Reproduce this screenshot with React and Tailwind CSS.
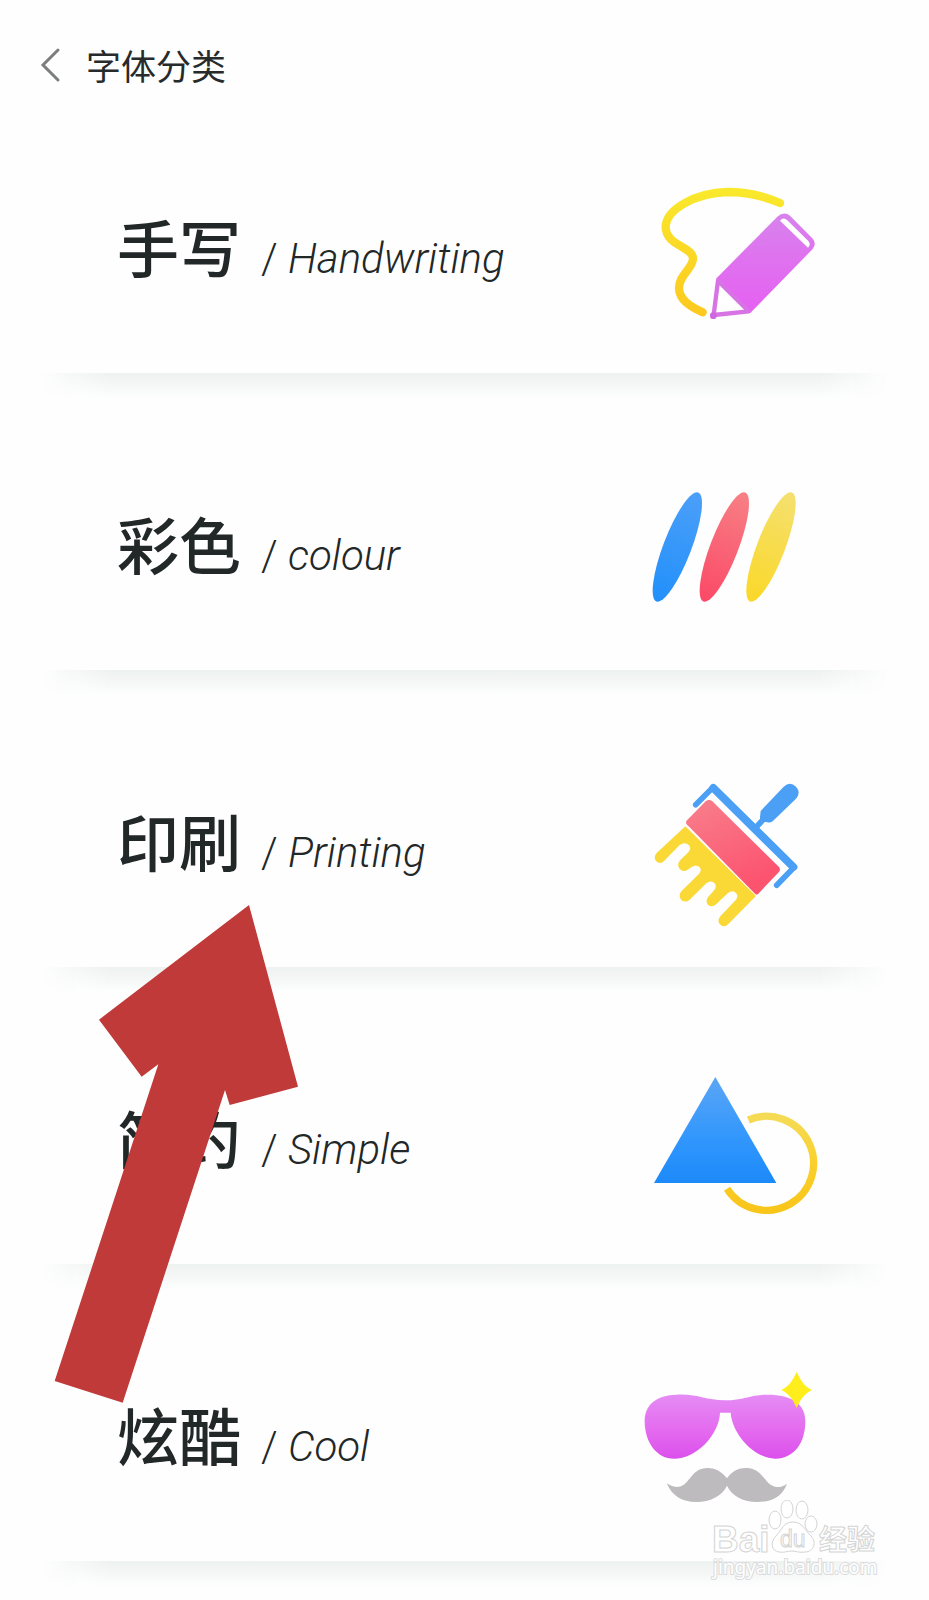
import React from "react";

function PencilIcon() {
  return (
    <g transform="translate(0 6)">
      <defs>
        <linearGradient id="line" x1="0" y1="0" x2="0" y2="1">
          <stop offset="0" stopColor="#f9e82c" />
          <stop offset="1" stopColor="#fdc91f" />
        </linearGradient>
        <linearGradient id="pencil" x1="0" y1="0" x2="0" y2="1">
          <stop offset="0" stopColor="#d783ec" />
          <stop offset="0.45" stopColor="#df72ef" />
          <stop offset="1" stopColor="#e560f2" />
        </linearGradient>
      </defs>
      <path
        d="M420 99C365 75 318 66 262 66C165 69 77 118 77 172C78 228 160 229 159 266C158 297 116 315 117 355C118 390 152 410 188 427"
        fill="none" stroke="url(#line)" strokeWidth="25" strokeLinecap="round"
      />
      <path d="M228 326L412 140Q432 122 450 137L517 205Q531 221 518 237L330 430Z" fill="url(#pencil)" />
      <path d="M420 152Q430 140 441 150L505 213Q514 224 504 233Z" fill="#fff" />
      <path d="M234 332L221 435L326 424Z" fill="#fff" stroke="#d873e6" strokeWidth="13" strokeLinejoin="round" />
      <circle cx="220" cy="437" r="10" fill="#cf66de" />
    </g>
  );
}

function ColourIcon() {
  return (
    <g transform="translate(0 45)">
      <defs>
        <linearGradient id="blueLeaf" x1="0" y1="0" x2="0" y2="1">
          <stop offset="0" stopColor="#4b9ff8" />
          <stop offset="1" stopColor="#2290fb" />
        </linearGradient>
        <linearGradient id="redLeaf" x1="0" y1="0" x2="0" y2="1">
          <stop offset="0" stopColor="#f78085" />
          <stop offset="1" stopColor="#fb4967" />
        </linearGradient>
        <linearGradient id="yellowLeaf" x1="0" y1="0" x2="0" y2="1">
          <stop offset="0" stopColor="#f5e070" />
          <stop offset="1" stopColor="#fad828" />
        </linearGradient>
      </defs>
      <ellipse rx="42" ry="175" transform="translate(112 201) rotate(21)" fill="url(#blueLeaf)" />
      <ellipse rx="42" ry="175" transform="translate(253 201) rotate(21)" fill="url(#redLeaf)" />
      <ellipse rx="42" ry="175" transform="translate(393 201) rotate(21)" fill="url(#yellowLeaf)" />
    </g>
  );
}

function BrushIcon() {
  return (
    <g transform="translate(0 24)">
      <defs>
        <linearGradient id="band" x1="0" y1="0" x2="0.5" y2="1">
          <stop offset="0" stopColor="#f8808c" />
          <stop offset="1" stopColor="#fc536f" />
        </linearGradient>
      </defs>
      <path d="M167 104L220 51L463 291L410 346" fill="none" stroke="#4ba0f6" strokeWidth="17" strokeLinecap="round" strokeLinejoin="round" />
      <path d="M220 54L460 291" fill="none" stroke="#4ba0f6" strokeWidth="24" strokeLinecap="round" />
      <path d="M349 171L374 144" stroke="#4ba0f6" strokeWidth="17" />
      <path d="M362 123L431 50Q450 33 468 50Q484 67 468 86L398 154Q391 159 382 157L365 154Q359 151 360 142Z" fill="#4ba0f6" />
      <path d="M197 94Q207 86 217 94L417 291Q423 299 416 307L355 371Q350 376 345 371L140 163Q136 157 141 151Z" fill="url(#band)" />
      <path
        d="M136 169L348 378L265 462Q253 474 241 464Q230 454 241 439L288 389Q297 376 287 368Q277 359 264 369L230 401Q216 415 204 404Q195 393 205 380L223 360Q232 347 222 338Q211 330 199 340L149 389Q136 400 124 390Q114 378 124 364L176 313Q187 301 179 292Q168 281 155 291L143 299Q130 308 119 297Q110 285 119 272L145 247Q156 233 146 225Q135 215 119 225L73 272Q60 285 48 273Q39 262 50 249Z"
        fill="#fad936"
      />
    </g>
  );
}

function ShapesIcon() {
  return (
    <g transform="translate(0 3)">
      <defs>
        <linearGradient id="tri" x1="0" y1="0" x2="0" y2="1">
          <stop offset="0" stopColor="#5ba6f5" />
          <stop offset="0.6" stopColor="#3096fd" />
          <stop offset="1" stopColor="#1c8af8" />
        </linearGradient>
        <linearGradient id="ring" x1="0" y1="0" x2="0" y2="1">
          <stop offset="0" stopColor="#f5db55" />
          <stop offset="0.5" stopColor="#fad02d" />
          <stop offset="1" stopColor="#f8c51a" />
        </linearGradient>
      </defs>
      <path d="M226 51L409 369H42Z" fill="url(#tri)" />
      <path d="M325 180A141 141 0 1 1 261 386" fill="none" stroke="url(#ring)" strokeWidth="22" />
    </g>
  );
}

function GlassesIcon() {
  return (
    <g transform="translate(-30 12)">
      <defs>
        <linearGradient id="lens" x1="0" y1="0" x2="0" y2="1">
          <stop offset="0" stopColor="#e58cf5" />
          <stop offset="0.55" stopColor="#e46bef" />
          <stop offset="1" stopColor="#db50ec" />
        </linearGradient>
      </defs>
      <path
        d="M44 185C43 136 78 105 140 104C206 101 225 121 285 121C340 121 364 104 408 104C488 103 527 132 526 187C525 250 491 297 435 296C367 293 306 218 302 158H270C267 225 199 296 132 296C81 296 45 248 44 185Z"
        fill="url(#lens)"
      />
      <path d="M500 36C514 65 522 77 546 90C522 103 514 115 500 143C486 115 478 103 454 90C478 77 486 65 500 36Z" fill="#ffed1c" />
      <path
        d="M291 355C272 331 250 323 230 324C178 327 180 381 140 381C128 381 119 375 110 370C127 409 156 426 199 426C240 426 276 408 291 377C306 408 340 426 382 426C425 426 457 410 471 371C461 378 451 382 440 381C403 378 402 326 350 324C330 323 307 331 291 355Z"
        fill="#bdbbbd"
      />
    </g>
  );
}

const categories = [
  { zh: "手写", en: "Handwriting", Icon: PencilIcon },
  { zh: "彩色", en: "colour", Icon: ColourIcon },
  { zh: "印刷", en: "Printing", Icon: BrushIcon },
  { zh: "简约", en: "Simple", Icon: ShapesIcon },
  { zh: "炫酷", en: "Cool", Icon: GlassesIcon },
];

function CategoryCard({ zh, en, Icon }) {
  return (
    <li className="flex flex-col">
      <a href={"#" + en.toLowerCase()} className="flex h-60 items-center justify-between pl-[117px] pr-[89px]">
        <span className="flex items-baseline gap-5 pb-0.5 text-[#222727]">
          <span className="font-['Noto_Sans_CJK_SC',sans-serif] text-[62px] leading-[72px] font-medium">{zh}</span>
          <span className="font-[Roboto,sans-serif] text-[42px] leading-[72px] font-light">
            / <em>{en}</em>
          </span>
        </span>
        <svg viewBox="0 0 600 510" className="h-[170px] w-[200px] shrink-0" aria-hidden="true">
          <Icon />
        </svg>
      </a>
      <div className="mx-10 h-[26px] bg-linear-to-b from-[#edf1f0] to-[#fefefe] [mask-image:linear-gradient(to_right,transparent,black_70px,black_calc(100%-70px),transparent)]" />
    </li>
  );
}

function Watermark() {
  return (
    <svg viewBox="0 0 180 90" className="absolute right-[44px] bottom-[10px] h-[90px] w-[180px]" aria-hidden="true">
      <g fill="#fff" stroke="#d4d4d4" strokeWidth="1">
        <text x="7" y="52" fontFamily="Liberation Sans, sans-serif" fontSize="37" fontWeight="700">Bai</text>
        <ellipse cx="70" cy="20" rx="6" ry="9" />
        <ellipse cx="82" cy="9" rx="6" ry="9" />
        <ellipse cx="97" cy="10" rx="6" ry="9" />
        <ellipse cx="106" cy="24" rx="6" ry="8" />
        <path d="M88 22C98 22 100 31 106 36C112 42 109 52 100 52C94 53 91 51 87 51C82 51 79 53 74 52C66 51 65 42 71 36C77 30 78 22 88 22Z" />
        <text x="75" y="47" fontFamily="Liberation Sans, sans-serif" fontSize="23">du</text>
        <text x="114" y="50" fontFamily="Noto Sans CJK SC, sans-serif" fontSize="28" fontWeight="700">经验</text>
        <text x="8" y="74" fontFamily="Noto Sans, sans-serif" fontSize="19" strokeWidth="2" paintOrder="stroke" stroke="#dadcdc">jingyan.baidu.com</text>
      </g>
    </svg>
  );
}

export default function App() {
  return (
    <main className="relative min-h-screen overflow-hidden bg-[#fefefe] pb-[13px]">
      <header className="flex h-[133px] items-center gap-6 px-10 pb-1">
        <button type="button" aria-label="返回" className="flex">
          <svg viewBox="0 0 22 36" className="h-9 w-[22px]" fill="none" stroke="#7c7e7e" strokeWidth="3" strokeLinecap="round">
            <path d="M18 3L3 18L18 33" />
          </svg>
        </button>
        <h1 className="font-['Noto_Sans_CJK_SC',sans-serif] text-[35px] leading-[48px] text-[#272b2b]">字体分类</h1>
      </header>
      <ul className="flex flex-col gap-[31px]">
        {categories.map((c) => (
          <CategoryCard key={c.en} {...c} />
        ))}
      </ul>
      <svg viewBox="0 0 840 1620" className="absolute top-[880px] left-10 h-[540px] w-[280px]" aria-hidden="true">
        <path d="M627 75L774 620L569 675L555 630L248 1568L44 1503L355 553L305 590L177 419Z" fill="#c03a39" />
      </svg>
      <Watermark />
    </main>
  );
}
